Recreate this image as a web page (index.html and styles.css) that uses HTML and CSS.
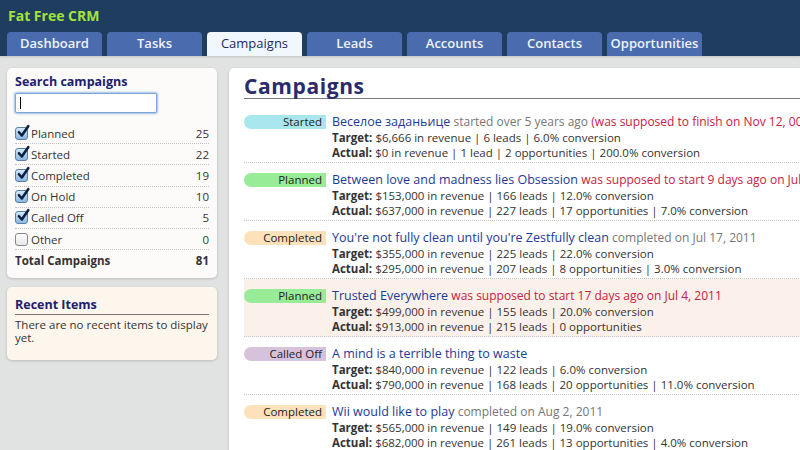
FILE: index.html
```html
<!DOCTYPE html>
<html>
<head>
<meta charset="utf-8">
<link rel="stylesheet" href="styles.css">
</head>
<body>
<header class="top">
  <div class="brand">Fat Free CRM</div>
  <nav class="tabs">
    <a class="tab">Dashboard</a>
    <a class="tab">Tasks</a>
    <a class="tab active">Campaigns</a>
    <a class="tab">Leads</a>
    <a class="tab">Accounts</a>
    <a class="tab">Contacts</a>
    <a class="tab">Opportunities</a>
  </nav>
</header>
<div class="page">
  <aside class="side">
    <section class="panel search">
      <h3 class="ptitle">Search campaigns</h3>
      <div class="input"><span class="caret"></span></div>
      <ul class="filters">
        <li><span class="cb on"><svg viewBox="0 0 12 12"><path d="M2.5 6.2 L5 9 L10.5 1" /></svg></span><span class="lbl">Planned</span><span class="num">25</span></li>
        <li><span class="cb on"><svg viewBox="0 0 12 12"><path d="M2.5 6.2 L5 9 L10.5 1" /></svg></span><span class="lbl">Started</span><span class="num">22</span></li>
        <li><span class="cb on"><svg viewBox="0 0 12 12"><path d="M2.5 6.2 L5 9 L10.5 1" /></svg></span><span class="lbl">Completed</span><span class="num">19</span></li>
        <li><span class="cb on"><svg viewBox="0 0 12 12"><path d="M2.5 6.2 L5 9 L10.5 1" /></svg></span><span class="lbl">On Hold</span><span class="num">10</span></li>
        <li><span class="cb on"><svg viewBox="0 0 12 12"><path d="M2.5 6.2 L5 9 L10.5 1" /></svg></span><span class="lbl">Called Off</span><span class="num">5</span></li>
        <li><span class="cb"></span><span class="lbl">Other</span><span class="num">0</span></li>
        <li class="total"><span class="lbl">Total Campaigns</span><span class="num">81</span></li>
      </ul>
    </section>
    <section class="panel recent">
      <h3 class="ptitle ruled">Recent Items</h3>
      <p class="empty">There are no recent items to display yet.</p>
    </section>
  </aside>
  <main class="main">
    <h1 class="mtitle">Campaigns</h1>
    <ul class="list">
      <li class="row">
        <span class="badge started">Started</span>
        <div class="info">
          <div class="head"><a class="name">Веселое заданьице</a> <span class="muted">started over 5 years ago</span> <span class="warn">(was supposed to finish on Nov 12, 0016)</span></div>
          <div><b>Target:</b> $6,666 in revenue | 6 leads | 6.0% conversion</div>
          <div><b>Actual:</b> $0 in revenue | 1 lead | 2 opportunities | 200.0% conversion</div>
        </div>
      </li>
      <li class="row">
        <span class="badge planned">Planned</span>
        <div class="info">
          <div class="head"><a class="name">Between love and madness lies Obsession</a> <span class="warn">was supposed to start 9 days ago on Jul 12, 2011</span></div>
          <div><b>Target:</b> $153,000 in revenue | 166 leads | 12.0% conversion</div>
          <div><b>Actual:</b> $637,000 in revenue | 227 leads | 17 opportunities | 7.0% conversion</div>
        </div>
      </li>
      <li class="row">
        <span class="badge completed">Completed</span>
        <div class="info">
          <div class="head"><a class="name">You're not fully clean until you're Zestfully clean</a> <span class="muted">completed on Jul 17, 2011</span></div>
          <div><b>Target:</b> $355,000 in revenue | 225 leads | 22.0% conversion</div>
          <div><b>Actual:</b> $295,000 in revenue | 207 leads | 8 opportunities | 3.0% conversion</div>
        </div>
      </li>
      <li class="row hl">
        <span class="badge planned">Planned</span>
        <div class="info">
          <div class="head"><a class="name">Trusted Everywhere</a> <span class="warn">was supposed to start 17 days ago on Jul 4, 2011</span></div>
          <div><b>Target:</b> $499,000 in revenue | 155 leads | 20.0% conversion</div>
          <div><b>Actual:</b> $913,000 in revenue | 215 leads | 0 opportunities</div>
        </div>
      </li>
      <li class="row">
        <span class="badge calledoff">Called Off</span>
        <div class="info">
          <div class="head"><a class="name">A mind is a terrible thing to waste</a></div>
          <div><b>Target:</b> $840,000 in revenue | 122 leads | 6.0% conversion</div>
          <div><b>Actual:</b> $790,000 in revenue | 168 leads | 20 opportunities | 11.0% conversion</div>
        </div>
      </li>
      <li class="row">
        <span class="badge completed">Completed</span>
        <div class="info">
          <div class="head"><a class="name">Wii would like to play</a> <span class="muted">completed on Aug 2, 2011</span></div>
          <div><b>Target:</b> $565,000 in revenue | 149 leads | 19.0% conversion</div>
          <div><b>Actual:</b> $682,000 in revenue | 261 leads | 13 opportunities | 4.0% conversion</div>
        </div>
      </li>
    </ul>
  </main>
</div>
</body>
</html>
```
FILE: styles.css
```css
* { box-sizing: border-box; }
html, body { margin: 0; padding: 0; }
body {
  width: 800px;
  height: 450px;
  overflow: hidden;
  background: #e1e3e3;
  font-family: "Open Sans", "DejaVu Sans", sans-serif;
  font-size: 11.5px;
  color: #333;
}
.top {
  background: #1f3e5f;
  height: 56px;
  padding: 6px 0 0 7px;
  box-shadow: 0 1px 2px rgba(0,0,0,0.15);
}
.brand {
  color: #a4e43a;
  font-weight: bold;
  font-size: 14px;
  line-height: 20px;
  padding-left: 1px;
}
.tabs {
  display: flex;
  gap: 5px;
  margin-top: 6px;
}
.tab {
  width: 95px;
  height: 24px;
  line-height: 23px;
  text-align: center;
  background: #4a6caf;
  color: #eef3fb;
  border-radius: 4px 4px 0 0;
  font-size: 13px;
  font-weight: 600;
}
.tab.active {
  background: #f0f8fe;
  color: #1d2a5c;
  font-weight: 500;
}
.page {
  display: flex;
  gap: 12px;
  padding: 12px 0 0 7px;
  width: 1100px;
}
.side {
  width: 210px;
  flex: none;
  display: flex;
  flex-direction: column;
  gap: 9px;
}
.panel {
  border-radius: 5px;
  box-shadow: 0 1px 3px rgba(0,0,0,0.18);
  padding: 6px 8px 6px 8px;
}
.search { background: #fdfbfa; height: 210px; }
.recent { background: #fdf6ec; height: 73px; padding-top: 10px; }
.ptitle {
  margin: 0;
  font-size: 12.5px;
  font-weight: bold;
  color: #202070;
  line-height: 16px;
}
.ptitle.ruled {
  border-bottom: 1px solid #777;
  padding-bottom: 1px;
}
.input {
  margin-top: 3px;
  width: 142px;
  height: 20px;
  border: 1px solid #7ea6d4;
  box-shadow: 0 0 2px 1px #9cc0e8;
  border-radius: 2px;
  background: #fff;
  padding: 3px 0 0 4px;
}
.caret {
  display: block;
  width: 1px;
  height: 12px;
  background: #000;
}
.filters {
  list-style: none;
  margin: 10px 0 0 0;
  padding: 0;
}
.filters li {
  display: flex;
  align-items: center;
  height: 21.2px;
  border-bottom: 1px dotted #c4c4c4;
  color: #333;
}
.filters li.total { border-bottom: none; font-weight: bold; }
.lbl { flex: 1; padding-left: 3px; }
.total .lbl { padding-left: 0; }
.num { text-align: right; }
.cb {
  width: 13px;
  height: 13px;
  border: 1px solid #8a8a8a;
  border-radius: 3px;
  background: linear-gradient(#ffffff, #e6e6e6);
  flex: none;
  position: relative;
}
.cb.on {
  background: linear-gradient(#d4e8f9, #8db6df);
  border-color: #5a7fa8;
}
.cb svg {
  position: absolute;
  left: 0;
  top: -3px;
  width: 14px;
  height: 14px;
  overflow: visible;
}
.cb svg path {
  fill: none;
  stroke: #0d1f3f;
  stroke-width: 2.2;
  stroke-linecap: round;
  stroke-linejoin: round;
}
.empty {
  margin: 3px 0 0 0;
  line-height: 13px;
  font-size: 11.5px;
  color: #333;
}
.main {
  width: 860px;
  flex: none;
  background: #fff;
  border-radius: 5px 0 0 0;
  box-shadow: 0 1px 3px rgba(0,0,0,0.18);
  padding: 6px 0 0 15px;
  height: 400px;
}
.mtitle {
  margin: 0;
  font-size: 21px;
  letter-spacing: 0.6px;
  font-weight: bold;
  color: #2a2a6c;
  line-height: 24px;
  border-bottom: 1px solid #777;
  padding-bottom: 0;
}
.list {
  list-style: none;
  margin: 6px 0 0 0;
  padding: 0;
}
.row {
  display: flex;
  align-items: flex-start;
  height: 58px;
  padding-top: 9px;
  border-bottom: 1px dotted #c8c8c8;
}
.row.hl { background: #fcf0ea; }
.badge {
  width: 82px;
  flex: none;
  height: 14px;
  margin-top: 1px;
  line-height: 14px;
  text-align: right;
  padding-right: 4px;
  border-radius: 7px 0 0 7px;
  color: #222;
  font-size: 11.5px;
  margin-right: 6px;
}
.started { background: #a9e7ee; }
.planned { background: #98ec98; }
.completed { background: #fde1bb; }
.calledoff { background: #d7c2dc; }
.info { line-height: 15.5px; white-space: nowrap; }
.head { font-size: 12.5px; }
.name { color: #1d3a98; }
.muted { color: #777; font-size: 12px; }
.warn { color: #c8203f; font-size: 12px; }
.info b { color: #333; }
```
